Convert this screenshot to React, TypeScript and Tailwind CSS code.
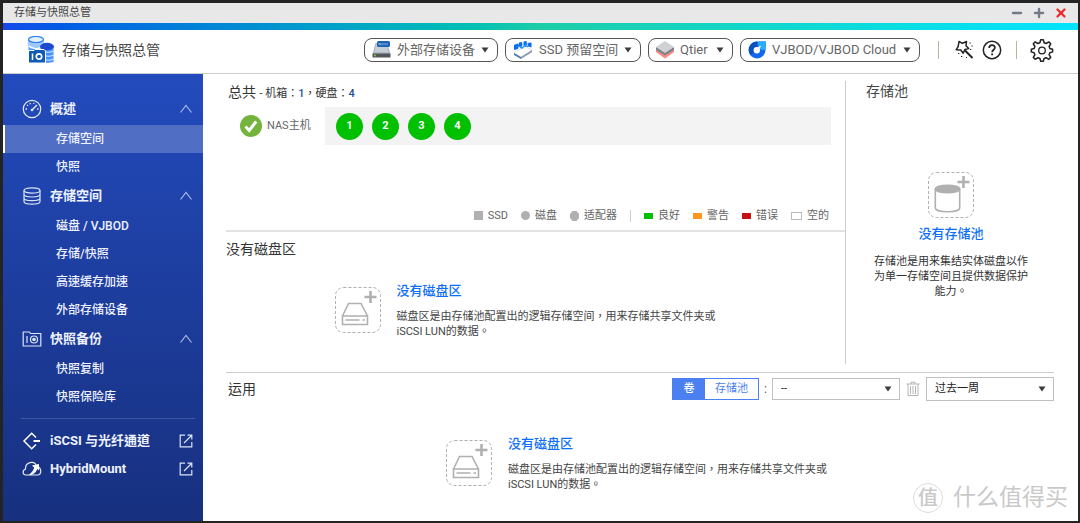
import type { ReactNode } from 'react';
import { Minus, Plus, X } from 'lucide-react';

const FONT = "font-['Roboto','Noto_Sans_CJK_TC',sans-serif]";

/* ---------- icons ---------- */

function LogoIcon() {
  return (
    <svg viewBox="0 0 26 27" className="h-[27px] w-[26px] shrink-0" aria-hidden="true">
      <path d="M.5 3.500v12h15v-12z" fill="#4d9bff" />
      <path d="M.5 4v5c0 3 15 3 15 0V4z" fill="#9cc8ff" />
      <ellipse cx="8" cy="3.500" rx="7.500" ry="3" fill="#e3f0ff" stroke="#2a7cf7" strokeWidth="1.200" />
      <path d="M1 10c2 2.500 8 3 13 1.500" fill="none" stroke="#fff" strokeWidth="1.400" />
      <path d="M12.500 11v15c3 1 9 1 13 0V11z" fill="#4a90f7" />
      <ellipse cx="19" cy="10.500" rx="7" ry="3.700" fill="#1b49cf" />
      <path d="M16 15.500c3 1 6.500 1 9.500-.5M16 19.500c3 1 6.500 1 9.500-.5M16 23.500c3 1 6.500 1 9.500-.5" fill="none" stroke="#cfe3ff" strokeWidth="1.200" />
      <path d="M.5 14.500H6l1-1h9l1.500 1.500v12H.5z" fill="#0f5bb5" stroke="#fff" strokeWidth="1" />
      <path d="M4.500 17.500v6.500" stroke="#fff" strokeWidth="1.500" />
      <circle cx="11" cy="20.500" r="2.700" fill="none" stroke="#fff" strokeWidth="1.700" />
    </svg>
  );
}

function DriveIcon() {
  return (
    <svg viewBox="0 0 19 17" className="h-[17px] w-[19px] shrink-0" aria-hidden="true">
      <path d="M3.500 2h11.500l3.500 11H.5z" fill="#b0b8c2" />
      <path d="M4.500 3h9.500l2.500 8h-14z" fill="#c6ced7" />
      <path d="M.5 12.500h18v4H.5z" fill="#53575c" />
      <circle cx="3" cy="14.500" r=".9" fill="#7edb2c" />
      <rect x="5" y="0" width="13" height="6" rx="1.500" fill="#1e62b4" />
      <path d="M7 4.200V2l2 2.200V2m2 0v2.200m2-2.200v2.200m2-2.200v2.200" stroke="#9cc4ee" strokeWidth=".8" fill="none" />
    </svg>
  );
}

function SsdIcon() {
  return (
    <svg viewBox="0 0 20 18" className="h-[18px] w-5 shrink-0" aria-hidden="true">
      <path d="M1 11.500 12 5.500l7 3.500-11 7z" fill="#fff" stroke="#c5ccd6" strokeWidth=".6" />
      <path d="m1 12 7 4v2l-7-4z" fill="#4c7ba8" />
      <path d="m8 16 11-7v2.200L8 18z" fill="#8f9bae" />
      <path d="m1 4 3.500-1.500 1.500 2-1 3.500-4 1zM6 1.500 9 1l.5 3-2 3.500L5.500 4zM10.500.5l3-.5.5 3-1 3-2.500-1.500zM14.500 2l4-.5v5l-3.500-1z" fill="#0c6fea" />
      <path d="m6 5 3 2 3-2.500 3 1" stroke="#2f93ff" strokeWidth="1.500" fill="none" />
    </svg>
  );
}

function QtierIcon() {
  return (
    <svg viewBox="0 0 18 18" className="size-[18px] shrink-0" aria-hidden="true">
      <path d="m0 11 9 6.500 9-6.500V8.500L9 14 0 8.500z" fill="#f98a7c" />
      <path d="m0 9 9 5.500L18 9V6L9 11 0 6z" fill="#7b828a" />
      <path d="m9 0 9 6-9 6-9-6z" fill="#cfd1d3" />
    </svg>
  );
}

function VjbodIcon() {
  return (
    <svg viewBox="0 0 18 18" className="size-[18px] shrink-0" aria-hidden="true">
      <path d="M9 .5h9L17.500 9A8.500 8.500 0 1 1 9 .5z" fill="#1268ef" />
      <path d="M10 .5h8l-.7 8.500L12 8.500 10.500 6z" fill="#29abff" />
      <path d="M9 .5A8.500 8.500 0 0 0 2.500 14L7 11 6 8l3-2z" fill="#0c51bd" />
      <circle cx="8.800" cy="9.200" r="3.200" fill="#fff" />
      <path d="m9 9 3.500-4" stroke="#fff" strokeWidth="1.500" />
    </svg>
  );
}

function WandIcon() {
  return (
    <svg viewBox="0 0 20 20" className="size-5" fill="none" stroke="#222" strokeWidth="1.500" aria-hidden="true">
      <path d="m5 1.500 3.500 1.800L12.500 1.500l-.5 4.300 2.700 2.800-3.800.9-1.700 3.700-2.400-3.200-4.600-.2 2-3.400z" strokeLinejoin="round" />
      <path d="m11 10.500 7.500 7.500" strokeWidth="2" />
      <path d="M15.500 3h1.300M17.500 6h1.300M16 9.500h1.300M4 13.500h1.300M7 16.500h1.300M12 17.500h1" strokeWidth="1.200" />
    </svg>
  );
}

function HelpIcon() {
  return (
    <svg viewBox="0 0 20 20" className="size-5" fill="none" stroke="#222" aria-hidden="true">
      <circle cx="10" cy="10" r="8.700" strokeWidth="1.500" />
      <path d="M7.200 8c0-3.800 5.700-3.700 5.700-.3 0 2-2.800 2.200-2.800 4.500" strokeWidth="1.700" />
      <path d="M10.100 13.500v1.800" strokeWidth="1.800" />
    </svg>
  );
}

function GearIcon() {
  return (
    <svg viewBox="0 0 24 24" className="size-6" fill="none" stroke="#222" strokeWidth="1.500" strokeLinejoin="round" aria-hidden="true">
      <path d="M10.700 1.700h2.600l.8 3 2 .8 2.700-1.600 1.900 1.900-1.600 2.700.8 2 2.700.8v2.600l-2.700.8-.8 2 1.600 2.700-1.900 1.900-2.700-1.600-2 .8-.8 2.700h-2.600l-.8-2.700-2-.8-2.700 1.600-1.900-1.900 1.600-2.700-.8-2-2.800-.8v-2.600l2.800-.8.8-2-1.600-2.700 1.900-1.900 2.700 1.600 2-.8z" />
      <circle cx="12" cy="12.500" r="3.300" strokeWidth="1.300" />
    </svg>
  );
}

function GaugeIcon() {
  return (
    <svg viewBox="0 0 20 20" className="size-5" fill="none" stroke="#e6ecfa" aria-hidden="true">
      <circle cx="10" cy="10" r="8.700" strokeWidth="1.200" />
      <circle cx="10" cy="11" r="1.300" fill="#e6ecfa" stroke="none" />
      <path d="m10.500 10.500 4.500-4.500" strokeWidth="1.400" />
      <path d="M3.500 10H5m10 0h1.500M5 6l1 .8M8 4l.4 1.200M11.500 4.800 12 3.800" strokeWidth="1.300" />
    </svg>
  );
}

function DisksIcon() {
  return (
    <svg viewBox="0 0 20 20" className="size-5" fill="none" stroke="#dbe4f8" strokeWidth="1.200" aria-hidden="true">
      <ellipse cx="10" cy="4.500" rx="8" ry="2.700" />
      <path d="M2 4.500v11c0 3.600 16 3.600 16 0v-11M2 8.300c0 3.600 16 3.600 16 0M2 12c0 3.600 16 3.600 16 0" />
    </svg>
  );
}

function SnapshotIcon() {
  return (
    <svg viewBox="0 0 20 20" className="size-5" fill="none" stroke="#dbe4f8" strokeWidth="1.200" aria-hidden="true">
      <path d="M1.200 17V3h6.300l1 1.500h10.300V17z" />
      <path d="M5 7v7" />
      <circle cx="12" cy="10.500" r="3.500" />
      <circle cx="12" cy="10.500" r="1.200" fill="#dbe4f8" />
    </svg>
  );
}

function IscsiIcon() {
  return (
    <svg viewBox="0 0 20 20" className="size-5" fill="none" stroke="#fff" strokeWidth="1.500" aria-hidden="true">
      <path d="m14 6.500-4.300-4.300L2 10l7.700 7.800L14 13.500" />
      <path d="M11.500 10H18" strokeWidth="2" />
    </svg>
  );
}

function HybridIcon() {
  return (
    <svg viewBox="0 0 20 20" className="size-5" fill="none" stroke="#e6ecfa" strokeWidth="1.200" aria-hidden="true">
      <path d="M4 16C.5 16 0 11.500 3.500 10 3 3 12.500 1 14.500 7 20 8.500 20 16 15.500 16z" />
      <path d="m10 6.500 7-1.500v6.500L15.300 10C13.500 14 11 16 6.500 16.200c3-2.200 4.500-4.200 5.700-7.400z" fill="#fff" stroke="none" />
    </svg>
  );
}

function ExternalIcon() {
  return (
    <svg viewBox="0 0 14 14" className="size-3.5" fill="none" stroke="#dbe4f8" strokeWidth="1.200" aria-hidden="true">
      <path d="M6 1.200H1.200v11.600h11.600V8" />
      <path d="M5 9 12.500 1.500M8.500 1.200h4.300v4.300" />
    </svg>
  );
}

function ChevronUpIcon() {
  return (
    <svg viewBox="0 0 14 10" className="h-2.5 w-3.5" fill="none" stroke="#a9bae6" strokeWidth="1.200" aria-hidden="true">
      <path d="m1.500 8.500 5.500-7 5.500 7" />
    </svg>
  );
}

function CheckIcon() {
  return (
    <svg viewBox="0 0 22 22" className="size-[22px] shrink-0" aria-hidden="true">
      <circle cx="11" cy="11" r="11" fill="#74b43c" />
      <path d="m5.500 11.500 3.700 4 7-9" fill="none" stroke="#fff" strokeWidth="3" />
    </svg>
  );
}

function TrashIcon() {
  return (
    <svg viewBox="0 0 14 16" className="h-4 w-3.5" fill="none" stroke="#b5b5b5" aria-hidden="true">
      <path d="M.5 3h13M5 3V1.200h4V3M2 3v11.500h10V3M4.500 5v8M7 5v8M9.500 5v8" />
    </svg>
  );
}

function Caret() {
  return (
    <svg viewBox="0 0 8 6" className="h-1.5 w-2 shrink-0" aria-hidden="true">
      <path d="M.5.500h7L4 5.500z" fill="#3c3c3c" />
    </svg>
  );
}

function EmptyIcon({ kind }: { kind: 'volume' | 'pool' }) {
  return (
    <svg viewBox="0 0 46 46" className="size-[46px] shrink-0" fill="none" stroke="#b0b0b0" aria-hidden="true">
      <rect x=".5" y=".5" width="45" height="45" rx="8" strokeDasharray="3 2" />
      <path d="M35.500 4v12M29.500 10h12" strokeWidth="2.600" />
      {kind === 'volume' ? (
        <g strokeWidth="1.600">
          <path d="M7.500 29v8.500h25V29zM7.500 29l6-12.500h12.500l6.500 12.500" />
          <path d="M10.500 33h14M27.500 33h2.500" />
        </g>
      ) : (
        <g strokeWidth="1.600">
          <path d="M7.300 17v19c0 5 24.400 5 24.400 0V17" />
          <ellipse cx="19.500" cy="17" rx="12.200" ry="3.800" fill="#b0b0b0" />
        </g>
      )}
    </svg>
  );
}

/* ---------- header ---------- */

function MenuButton({ icon, label, width }: { icon: ReactNode; label: string; width: string }) {
  return (
    <button
      type="button"
      className={`${width} flex h-6 items-center rounded-lg border border-[#555] bg-white pl-[7px] pr-2 text-[13px] whitespace-nowrap text-[#666]`}
    >
      {icon}
      <span className="ml-1.5 flex-1 text-left">{label}</span>
      <Caret />
    </button>
  );
}

function Header() {
  return (
    <header className="flex h-11 items-center border-b border-[#ccc] bg-white pr-6 pb-1 pl-[25px]">
      <LogoIcon />
      <h1 className="ml-2 text-sm text-[#444]">存储与快照总管</h1>
      <div className="ml-auto flex items-center gap-[7px]">
        <MenuButton width="w-[134px]" icon={<DriveIcon />} label="外部存储设备" />
        <MenuButton width="w-[136px]" icon={<SsdIcon />} label="SSD 预留空间" />
        <MenuButton width="w-[85px]" icon={<QtierIcon />} label="Qtier" />
        <MenuButton width="w-[180px]" icon={<VjbodIcon />} label="VJBOD/VJBOD Cloud" />
      </div>
      <div className="ml-[18px] h-[18px] w-px bg-[#b5b5a0]" />
      <button type="button" aria-label="向导" className="ml-[15px]">
        <WandIcon />
      </button>
      <button type="button" aria-label="帮助" className="ml-2">
        <HelpIcon />
      </button>
      <div className="ml-[14px] h-[18px] w-px bg-[#b5b5a0]" />
      <button type="button" aria-label="设置" className="ml-[13px]">
        <GearIcon />
      </button>
    </header>
  );
}

/* ---------- sidebar ---------- */

const sections = [
  { title: '概述', icon: <GaugeIcon />, items: ['存储空间', '快照'] },
  { title: '存储空间', icon: <DisksIcon />, items: ['磁盘 / VJBOD', '存储/快照', '高速缓存加速', '外部存储设备'] },
  { title: '快照备份', icon: <SnapshotIcon />, items: ['快照复制', '快照保险库'] },
];

const links = [
  { title: 'iSCSI 与光纤通道', icon: <IscsiIcon /> },
  { title: 'HybridMount', icon: <HybridIcon /> },
];

function Sidebar() {
  return (
    <nav className="w-[200px] shrink-0 bg-linear-to-b from-[#234bbd] to-[#17307f] pt-5 text-[#eef2fc]">
      {sections.map((section, s) => (
        <div key={section.title}>
          <button type="button" className="flex h-[31px] w-full items-center pr-2.5 pb-0.5 pl-[19px] text-[13px] font-bold">
            {section.icon}
            <span className="ml-2 flex-1 text-left">{section.title}</span>
            <ChevronUpIcon />
          </button>
          {section.items.map((item, i) => (
            <a
              key={item}
              href="#"
              className={`flex h-7 items-center border-l-2 pl-[51px] text-xs font-medium ${
                s === 0 && i === 0 ? 'border-white bg-[#506ec3]' : 'border-transparent'
              }`}
            >
              {item}
            </a>
          ))}
        </div>
      ))}
      <div className="mt-[7px] mr-2 mb-2 ml-[18px] h-px bg-[#3d569f]" />
      {links.map((link) => (
        <a key={link.title} href="#" className="flex h-7 items-center pr-2.5 pl-[19px] text-[13px] font-bold">
          {link.icon}
          <span className="ml-2 flex-1">{link.title}</span>
          <ExternalIcon />
        </a>
      ))}
    </nav>
  );
}

/* ---------- content ---------- */

const legend = [
  { label: '良好', swatch: 'bg-[#00c000]' },
  { label: '警告', swatch: 'bg-[#ff9422]' },
  { label: '错误', swatch: 'bg-[#c41212]' },
];

function Legend() {
  return (
    <div className="mt-auto mr-4 mb-[7px] flex items-center justify-end gap-[13px] text-[11px] leading-[15px] text-[#666]">
      <span className="flex items-center gap-[5px]">
        <i className="size-[9px] bg-[#b0b0b0]" />
        SSD
      </span>
      <span className="flex items-center gap-[5px]">
        <i className="size-[9px] rounded-full bg-[#b0b0b0]" />
        磁盘
      </span>
      <span className="flex items-center gap-[5px]">
        <svg viewBox="0 0 9 10" className="h-2.5 w-[9px]" aria-hidden="true">
          <path d="M2.500 0h4L9 3v4l-2.500 3h-4L0 7V3z" fill="#b0b0b0" />
        </svg>
        适配器
      </span>
      <span className="h-3 w-px bg-[#ccc]" />
      {legend.map((entry) => (
        <span key={entry.label} className="flex items-center gap-[5px]">
          <i className={`h-1.5 w-[9px] ${entry.swatch}`} />
          {entry.label}
        </span>
      ))}
      <span className="flex items-center gap-[5px]">
        <i className="h-2 w-[11px] border border-[#bbb]" />
        空的
      </span>
    </div>
  );
}

function EmptyVolume() {
  return (
    <div className="flex items-center gap-4">
      <EmptyIcon kind="volume" />
      <div>
        <a href="#" className="block text-[13px] leading-5 font-medium text-[#0d6efd]">
          没有磁盘区
        </a>
        <p className="mt-2 w-[322px] text-[11px] leading-[15px] text-[#444]">
          磁盘区是由存储池配置出的逻辑存储空间，用来存储共享文件夹或 iSCSI LUN的数据。
        </p>
      </div>
    </div>
  );
}

function Picker({ label, value, className }: { label: string; value: string; className: string }) {
  return (
    <div className={`relative w-32 ${className}`}>
      <select
        aria-label={label}
        className="block h-full w-full appearance-none border border-[#c0c0c0] bg-white pl-2 text-[11px] text-[#222]"
      >
        <option>{value}</option>
      </select>
      <span className="pointer-events-none absolute inset-y-0 right-2 flex items-center">
        <Caret />
      </span>
    </div>
  );
}

function Overview() {
  return (
    <section className="flex h-[158px] flex-col border-b-2 border-[#e2e2e2] pt-2">
      <h2 className="ml-0.5 text-sm leading-5 text-[#333]">
        总共{' '}
        <span className="text-[11px]">
          - 机箱：<b className="font-medium text-[#1d4f9c]">1</b>，硬盘：
          <b className="font-medium text-[#1d4f9c]">4</b>
        </span>
      </h2>
      <div className="mt-[3px] mr-[14px] flex items-center">
        <div className="flex w-[99px] items-center gap-[5px] pl-3.5 text-[11px] text-[#666]">
          <CheckIcon />
          NAS主机
        </div>
        <div className="flex h-[38px] flex-1 items-center gap-[9px] bg-[#f3f3f3] pl-[11px]">
          {[1, 2, 3, 4].map((disk) => (
            <button
              key={disk}
              type="button"
              className="size-[27px] rounded-full bg-[#00c000] text-[11px] font-bold text-white"
            >
              {disk}
            </button>
          ))}
        </div>
      </div>
      <Legend />
    </section>
  );
}

function StoragePool() {
  return (
    <aside className="mt-[7px] mb-2 w-[211px] shrink-0 border-l border-[#ccc] pl-5">
      <h2 className="text-sm leading-5 text-[#444]">存储池</h2>
      <div className="mr-5 mt-[71px] flex flex-col items-center text-center">
        <EmptyIcon kind="pool" />
        <a href="#" className="mt-1.5 text-[13px] leading-5 font-medium text-[#0d6efd]">
          没有存储池
        </a>
        <p className="mt-2.5 w-[156px] text-[11px] leading-[15px] text-[#333]">
          存储池是用来集结实体磁盘以作为单一存储空间且提供数据保护能力。
        </p>
      </div>
    </aside>
  );
}

function Usage() {
  return (
    <section className="mr-6 ml-[23px] flex-1 border-t border-[#ccc] pt-1">
      <div className="flex h-6 items-center">
        <h2 className="ml-0.5 text-sm text-[#333]">运用</h2>
        <div className="ml-auto flex h-[22px] border border-[#4a80f0] text-[11px]">
          <button type="button" className="w-8 bg-[#4a80f0] font-medium text-white">
            卷
          </button>
          <button type="button" className="w-[53px] text-[#4a80f0]">
            存储池
          </button>
        </div>
        <span className="w-[13px] text-center text-xs text-[#555]">:</span>
        <Picker label="存储池" value="--" className="h-[22px]" />
        <button type="button" aria-label="删除" className="mx-[6px]">
          <TrashIcon />
        </button>
        <Picker label="时间范围" value="过去一周" className="h-6" />
      </div>
      <div className="mt-[33px] flex justify-center pr-1">
        <EmptyVolume />
      </div>
    </section>
  );
}

function Watermark() {
  return (
    <div
      aria-hidden="true"
      className="pointer-events-none absolute right-2.5 bottom-2 flex items-center gap-2.5 text-[#c9c9c9]"
    >
      <span className="flex size-[30px] items-center justify-center rounded-full border border-[#dcdcdc] text-xl font-medium">
        值
      </span>
      <span className="text-[23px] leading-[30px]">什么值得买</span>
    </div>
  );
}

export default function App() {
  return (
    <div lang="zh-TW" className={`${FONT} flex min-h-screen flex-col bg-[#242424] pt-[3px] pr-0.5 pb-0.5 pl-[3px]`}>
      <div className="relative flex flex-1 flex-col bg-white">
        <div className="flex h-5 items-center bg-[#e8e8e8] pr-2.5 pl-[11px] text-[11px] text-[#444]">
          <span className="flex-1">存储与快照总管</span>
          <div className="flex items-center gap-2">
            <button type="button" aria-label="最小化">
              <Minus className="size-3.5 text-[#727b87]" strokeWidth={4} />
            </button>
            <button type="button" aria-label="最大化">
              <Plus className="size-3.5 text-[#727b87]" strokeWidth={4} />
            </button>
            <button type="button" aria-label="关闭">
              <X className="size-3.5 text-[#ee2b2b]" strokeWidth={4} />
            </button>
          </div>
        </div>
        <div className="h-[7px] bg-linear-to-r from-[#1648ea] via-[#1ccda8] to-[#00e4ff]" />
        <Header />
        <div className="flex flex-1">
          <Sidebar />
          <main className="flex flex-1 flex-col">
            <div className="flex">
              <div className="ml-[23px] flex flex-1 flex-col">
                <Overview />
                <section className="flex flex-col">
                  <h2 className="mt-[7px] text-sm leading-5 text-[#333]">没有磁盘区</h2>
                  <div className="mt-[22px] flex justify-center pr-[18px] pb-[33px]">
                    <EmptyVolume />
                  </div>
                </section>
              </div>
              <StoragePool />
              <div className="w-[22px]" />
            </div>
            <Usage />
          </main>
        </div>
        <Watermark />
      </div>
    </div>
  );
}
